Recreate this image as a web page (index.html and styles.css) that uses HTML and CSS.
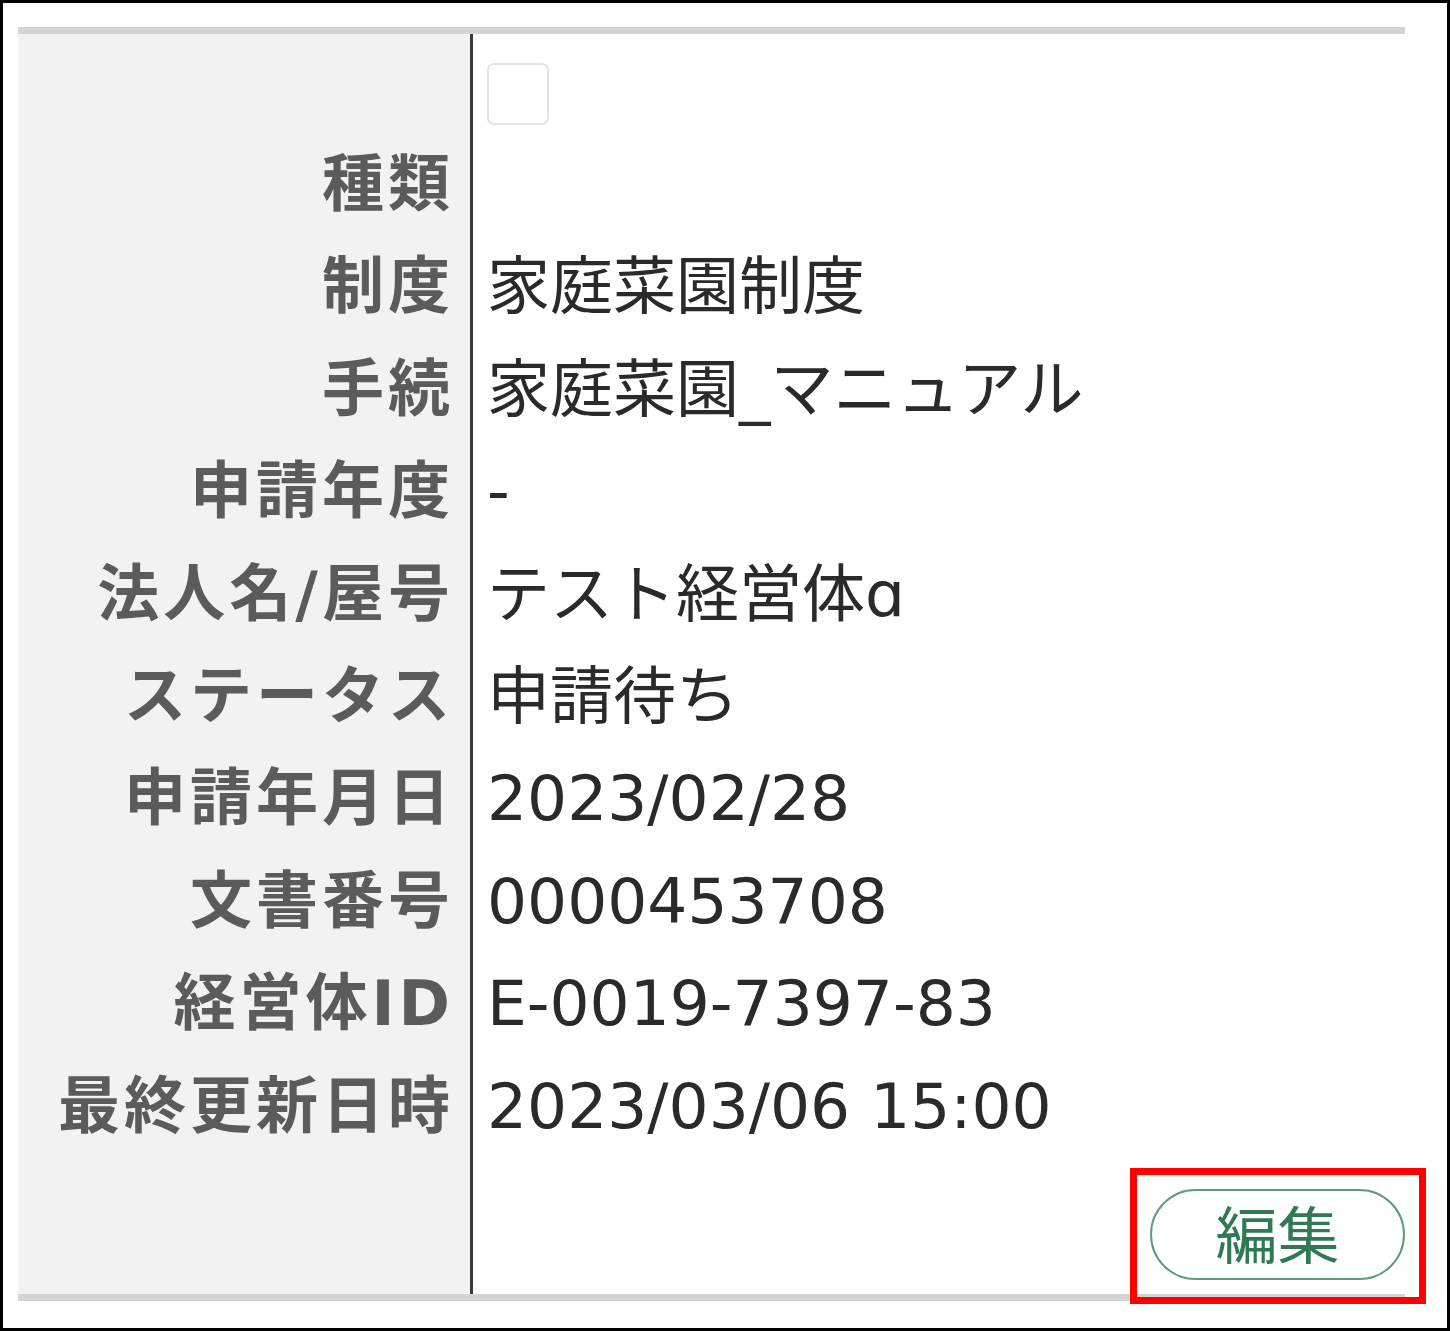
FILE: index.html
```html
<!DOCTYPE html>
<html>
<head>
    <title>詳細</title>
    <link rel="stylesheet" href="styles.css">
</head>
<body>
    <div class="frame">
        <div class="panel">
            <div class="detail">
                <div class="label first"></div>
                <div class="value first"><span class="check"></span></div>

                <div class="label">種類</div>
                <div class="value"></div>

                <div class="label">制度</div>
                <div class="value">家庭菜園制度</div>

                <div class="label">手続</div>
                <div class="value">家庭菜園_マニュアル</div>

                <div class="label">申請年度</div>
                <div class="value">-</div>

                <div class="label">法人名/屋号</div>
                <div class="value">テスト経営体ɑ</div>

                <div class="label">ステータス</div>
                <div class="value">申請待ち</div>

                <div class="label">申請年月日</div>
                <div class="value">2023/02/28</div>

                <div class="label">文書番号</div>
                <div class="value">0000453708</div>

                <div class="label">経営体ID</div>
                <div class="value">E-0019-7397-83</div>

                <div class="label">最終更新日時</div>
                <div class="value">2023/03/06 15:00</div>

                <div class="label last"></div>
                <div class="value last">
                    <button class="edit-btn">編集</button>
                </div>
            </div>
        </div>
        <!-- 注目枠 -->
        <div class="highlight"></div>
    </div>
</body>
</html>
```

FILE: styles.css
```css
html, body { margin: 0; padding: 0; background: #fff; }
body { font-family: "DejaVu Sans", "Noto Sans CJK JP", sans-serif; }
.frame { position: relative; width: 1450px; height: 1331px; box-sizing: border-box; border: 3px solid #000; padding: 24px 42px 0 15px; }
.panel { border-top: 7px solid #d4d4d4; border-bottom: 7px solid #d4d4d4; }
.detail { display: grid; grid-template-columns: 455px 1fr; }
.label { background: #f2f2f2; border-right: 3px solid #3a3a3a; height: 102.4px; line-height: 102px; text-align: right; padding-right: 16px; font-size: 62px; font-weight: bold; letter-spacing: 4px; color: #5b5b5b; white-space: nowrap; }
.value { height: 102.4px; line-height: 102px; padding-left: 14px; font-size: 63px; color: #2a2a2a; white-space: nowrap; }
.first { height: 100px; }
.check { display: inline-block; width: 58px; height: 58px; margin-top: 29px; border: 2px solid #e4e4e4; border-radius: 7px; vertical-align: top; }
.last { height: 136px; }
.value.last { display: flex; justify-content: flex-end; align-items: flex-start; padding-top: 31px; box-sizing: border-box; }
.edit-btn { width: 255px; height: 91px; border: 2px solid #5f9c7c; border-radius: 46px; background: #fff; color: #2f7a55; font-family: "Noto Sans CJK JP", sans-serif; font-size: 62px; line-height: 1; padding: 0 0 4px; }
.highlight { position: absolute; left: 1127px; top: 1165px; width: 282px; height: 122px; border: 7px solid #ff0000; }
```
